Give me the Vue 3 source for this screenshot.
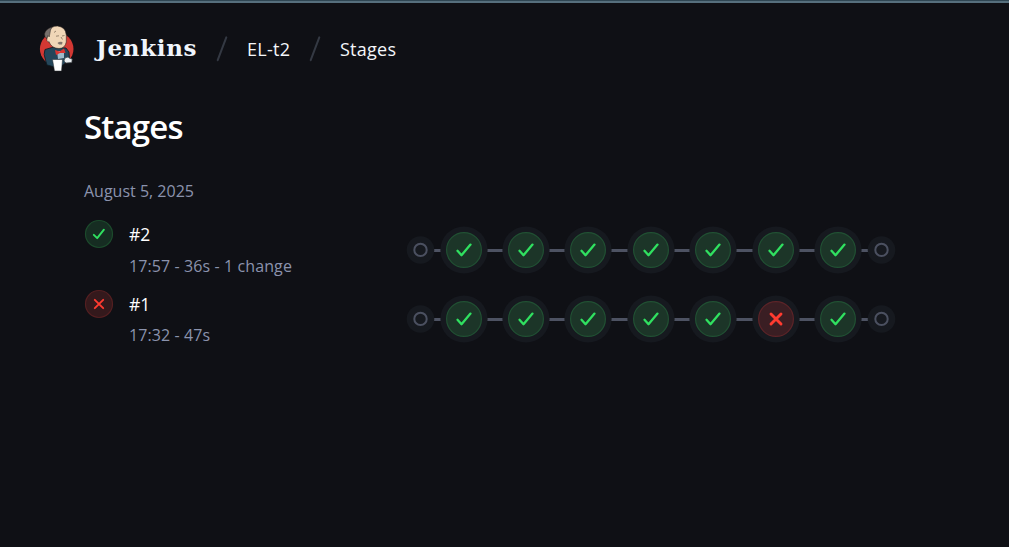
<script setup>
const xs = [464, 526, 588, 651, 713, 776, 838].map((x) => x - 406)
const links = [[28, 35], [81, 97], [143, 159], [205, 222], [268, 284], [330, 347], [393, 409], [455, 462]]
const runs = [
  { id: '#2', ok: true, info: '17:57 - 36s - 1 change', failed: -1 },
  { id: '#1', ok: false, info: '17:32 - 47s', failed: 5 },
]
</script>

<template>
  <main class="page">
    <header class="bar">
      <svg class="logo" width="38" height="50" viewBox="0 0 38 50">
        <ellipse cx="18.7" cy="24" rx="16.8" ry="16.5" fill="#d33833" />
        <path d="M7 24.5 L14 22.5 L28 23 L31 27 L31.5 34 L25 40 L21 43 L9 40 L7.5 35 Q5 29 7 24.5Z" fill="#24465a" stroke="#0d1a22" stroke-width=".8" />
        <path d="M19 26 L26 26 L26 33 L20 34Z" fill="#9fb9c9" />
        <path d="M11 6 Q13 1 19.5 1 Q27.8 2 28.3 10 L28.3 17 Q27 23.5 21 23.5 Q14 23.5 11 17 L8.5 13Z" fill="#f0d6b7" stroke="#2b2522" stroke-width=".6" />
        <path d="M14 2 Q7.5 4 6.5 9 Q6.5 12 8.5 13.5 L10 10.5 L11.2 12 L12 8 L12.5 5Z" fill="#77706c" stroke="#2b2522" stroke-width=".5" />
        <path d="M9.5 12 Q7.5 17 11.5 17" fill="#f0d6b7" stroke="#2b2522" stroke-width=".5" />
        <path d="M16 7.5 L18 6 M18 11.2 L21 10.8 M24 11 L26.5 10.5 M23 12 L24.5 14.5" stroke="#74614f" stroke-width=".7" fill="none" />
        <path d="M19.5 18 Q21.5 16 24.5 17 L24 19.5 L21 19.5Z" fill="#82756c" />
        <path d="M17 25 L21.5 26.5 L26 23.5 L27.5 28 L22 28 L18 30Z" fill="#dd3430" />
        <path d="M14.5 34.5 L24.5 34.5 L23.5 46 L16.5 46Z" fill="#fff" stroke="#25292d" stroke-width=".5" />
        <path d="M27 33 L30 32 L32 33.5 L34.2 34 L33.8 37.5 L28 38 L26 36Z" fill="#e9edf0" stroke="#42474a" stroke-width=".7" />
      </svg>
      <span class="brand">Jenkins</span>
      <svg class="slash" width="12" height="26" viewBox="0 0 12 26"><path d="M10.3 1.4 1.7 24.2" /></svg>
      <span class="crumb job">EL-t2</span>
      <svg class="slash" width="12" height="26" viewBox="0 0 12 26"><path d="M10.3 1.4 1.7 24.2" /></svg>
      <span class="crumb stages">Stages</span>
    </header>
    <section class="content">
      <h1>Stages</h1>
      <p class="date">August 5, 2025</p>
      <article v-for="run in runs" :key="run.id" class="run">
        <svg class="status" width="30" height="30" viewBox="0 0 30 30">
          <circle cx="15" cy="15" r="13.5" :class="run.ok ? 'ok' : 'bad'" />
          <path v-if="run.ok" class="tick" d="M9.8 15.8 13.2 19.2 19.9 10.7" />
          <path v-else class="cross" d="M10.8 10.8 19.2 19.2 M19.2 10.8 10.8 19.2" />
        </svg>
        <div class="details">
          <span class="num">{{ run.id }}</span>
          <span class="info">{{ run.info }}</span>
        </div>
        <svg class="graph" width="490" height="50" viewBox="0 0 490 50">
          <path v-for="l in links" :key="l[0]" class="link" :d="`M${l[0]} 25.5H${l[1]}`" />
          <g v-for="x in [14.5, 475.5]" :key="x">
            <circle :cx="x" cy="25" r="13.8" class="halo" />
            <circle :cx="x" cy="24.9" r="6.2" class="ring" />
          </g>
          <g v-for="(x, i) in xs" :key="i" :transform="`translate(${x} 25)`">
            <circle r="23.6" class="halo" />
            <circle r="17.4" :class="i === run.failed ? 'bad node' : 'ok node'" />
            <path v-if="i === run.failed" class="cross big" d="M-5-5 5 5 M5-5-5 5" />
            <path v-else class="tick big" d="M-6.5 .8-2.5 5.2 6.5-5.4" />
          </g>
        </svg>
      </article>
    </section>
  </main>
</template>

<style>
body { background: #0f1015; }
</style>

<style scoped>
.page { box-sizing: border-box; width: 1009px; height: 547px; overflow: hidden; background: #0f1015; border-top: 1px solid #2f4653; font-family: "Open Sans", "Noto Sans", sans-serif; color: #fff; }
.bar { display: flex; align-items: center; height: 92px; padding-left: 38px; border-top: 2px solid #566f7d; white-space: nowrap; }
.logo { margin-top: 2px; }
.brand { width: 101px; margin: -2px 0 0 20px; font: bold 23px/30px "DejaVu Serif", serif; letter-spacing: .65px; color: #f0f5fc; }
.slash { margin-left: 19px; fill: none; stroke: #343943; stroke-width: 2; stroke-linecap: round; }
.crumb { margin-left: 19px; font-size: 18px; line-height: 24px; color: #f4f6fa; }
.job { width: 43px; letter-spacing: .3px; }
.stages { letter-spacing: .25px; }
.content { padding-left: 84px; }
h1 { margin: 10px 0 0; font-size: 33px; line-height: 44px; font-weight: 600; letter-spacing: -.85px; }
.date { margin: 30px 0 0; font-size: 16px; line-height: 24px; color: #8b93ad; }
.run { display: flex; height: 69.5px; white-space: nowrap; }
.date + .run { margin-top: 16px; }
.status { flex: none; }
.details { display: flex; flex-direction: column; width: 277px; margin-left: 15px; }
.num { font-size: 17.5px; line-height: 30px; }
.info { margin-top: 5px; font-size: 16px; line-height: 24px; letter-spacing: .1px; color: #8b93ad; }
.run + .run .info { margin-top: 4px; }
.graph { flex: none; margin-top: 6px; }
.run + .run .graph { margin-top: 5.5px; }
.ok { fill: #162d22; stroke: #1c4a2c; stroke-width: 1.2; }
.bad { fill: #34191c; stroke: #531f21; stroke-width: 1.2; }
.ok.node { fill: #1c3528; stroke: #215033; }
.bad.node { fill: #3a1e23; stroke: #5c2428; }
.tick, .cross { fill: none; stroke: #30e060; stroke-width: 1.9; stroke-linecap: round; stroke-linejoin: round; }
.cross { stroke: #ff3b30; }
.tick.big { stroke-width: 2.3; }
.cross.big { stroke-width: 2.9; }
.halo { fill: #16191f; }
.ring { fill: none; stroke: #4b5060; stroke-width: 2; }
.link { stroke: #4d5262; stroke-width: 3; }
</style>
